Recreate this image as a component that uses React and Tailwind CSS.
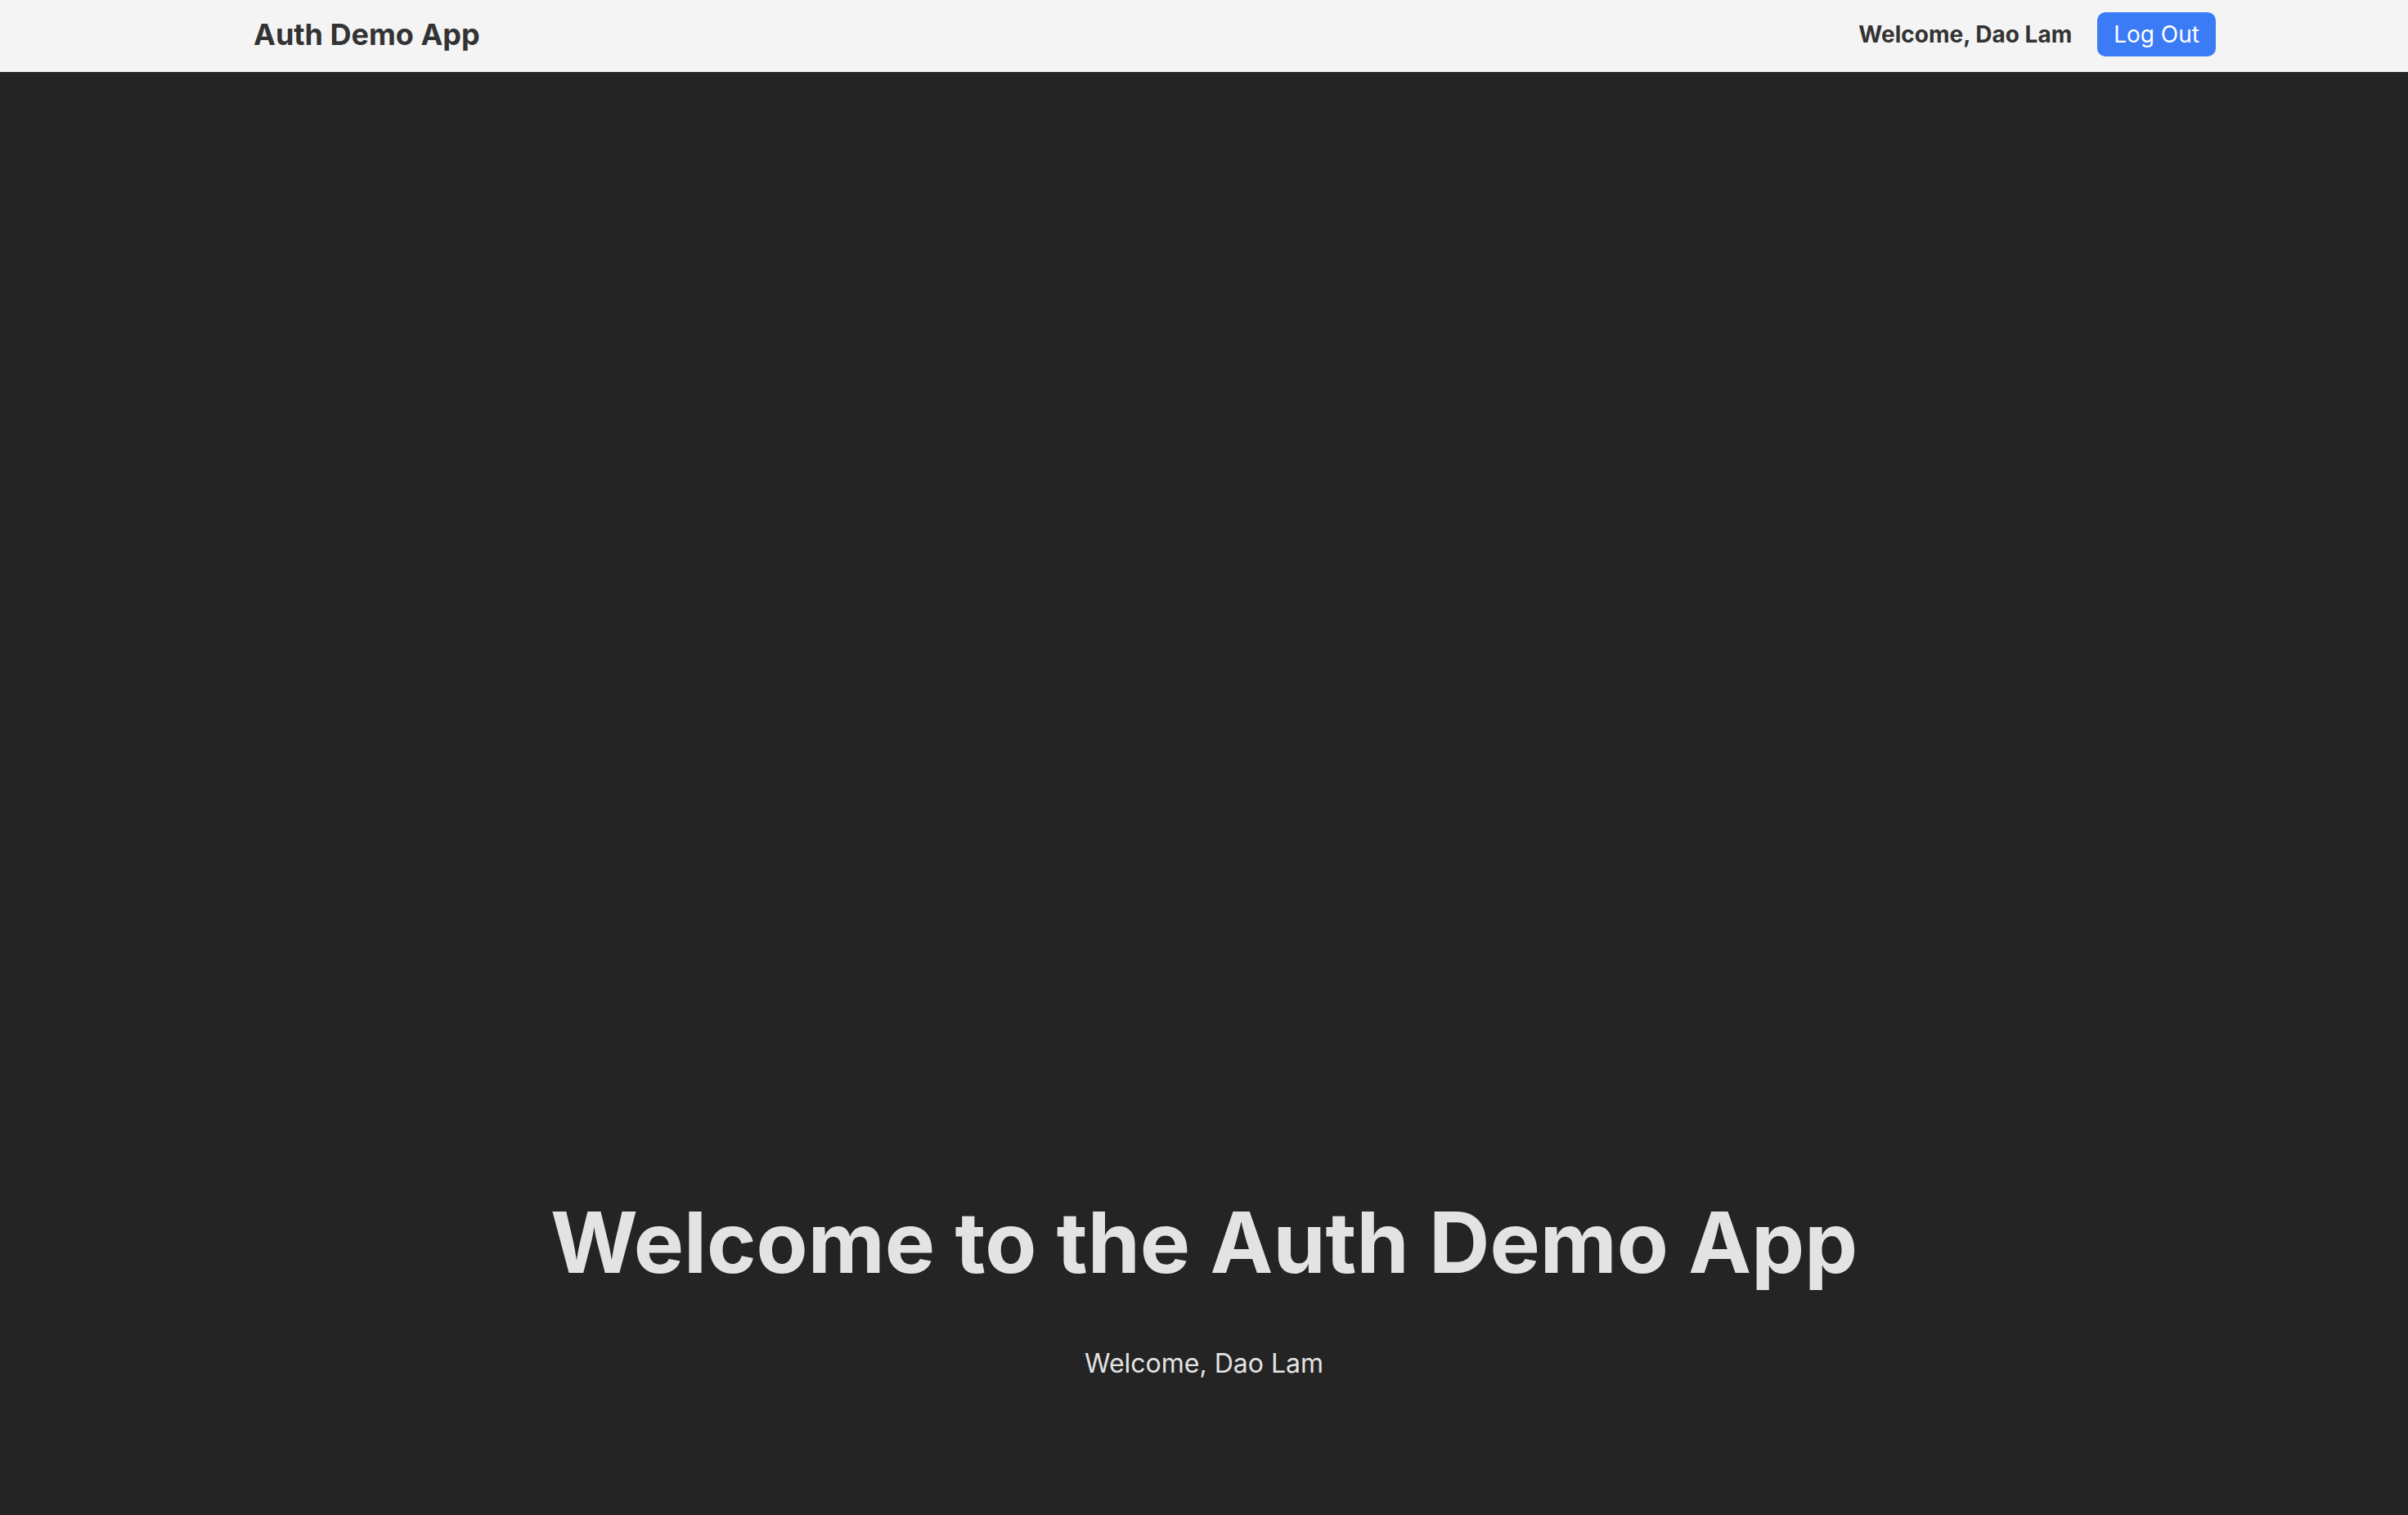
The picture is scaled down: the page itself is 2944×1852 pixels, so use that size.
export default function App() {
  return (
    <div className="min-h-screen bg-[#242424] flex flex-col" style={{ fontFamily: 'Inter, "Noto Sans", sans-serif' }}>
      <nav className="h-[88px] bg-[#f4f4f4] flex items-center justify-between pl-[310px] pr-[235px] pb-[4px]">
        <div className="text-[36px] font-bold text-[#333333] leading-none">Auth Demo App</div>
        <div className="flex items-center gap-[31px]">
          <span className="text-[28px] font-bold text-[#333333] leading-none">Welcome, Dao Lam</span>
          <button className="h-[54px] px-[20px] rounded-[10px] bg-[#3b7cf6] text-white text-[28px] leading-none">Log Out</button>
        </div>
      </nav>
      <main className="flex flex-col items-center pt-[1374px] text-[#e3e3e3]">
        <h1 className="text-[103px] leading-[1.1] font-bold m-0">Welcome to the Auth Demo App</h1>
        <p className="text-[32px] leading-[1.5] mt-[68px]">Welcome, Dao Lam</p>
      </main>
    </div>
  );
}
